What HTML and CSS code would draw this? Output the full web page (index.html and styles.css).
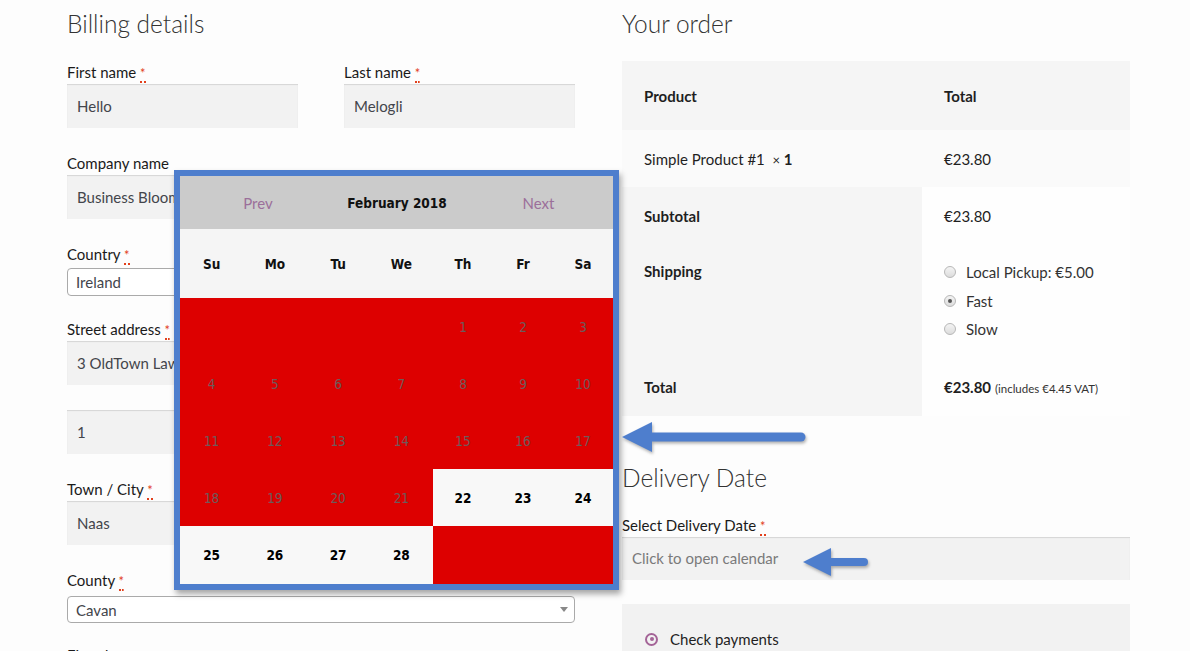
FILE: index.html
```html
<!DOCTYPE html>
<html lang="en">
<head>
<meta charset="utf-8">
<title>Checkout</title>
<link rel="stylesheet" href="styles.css">
</head>
<body>
<div class="page">
  <section class="billing">
    <h3 class="heading">Billing details</h3>
    <div class="row-two">
      <div class="field">
        <label class="label">First name <abbr class="req">*</abbr></label>
        <div class="input">Hello</div>
      </div>
      <div class="field">
        <label class="label">Last name <abbr class="req">*</abbr></label>
        <div class="input">Melogli</div>
      </div>
    </div>
    <div class="field">
      <label class="label">Company name</label>
      <div class="input">Business Bloom</div>
    </div>
    <div class="field">
      <label class="label">Country <abbr class="req">*</abbr></label>
      <div class="select select-country">Ireland</div>
    </div>
    <div class="field field-street">
      <label class="label">Street address <abbr class="req">*</abbr></label>
      <div class="input">3 OldTown Lawn</div>
      <div class="input input-second">1</div>
    </div>
    <div class="field">
      <label class="label">Town / City <abbr class="req">*</abbr></label>
      <div class="input">Naas</div>
    </div>
    <div class="field">
      <label class="label">County <abbr class="req">*</abbr></label>
      <div class="select select-county">Cavan<span class="caret"></span></div>
    </div>
    <div class="field field-last">
      <label class="label">Eircode <abbr class="req">*</abbr></label>
    </div>
  </section>

  <section class="order">
    <h3 class="heading">Your order</h3>
    <table class="order-table">
      <thead>
        <tr class="head-row"><th class="c1">Product</th><th class="c2">Total</th></tr>
      </thead>
      <tbody>
        <tr class="item-row"><td class="c1">Simple Product #1&nbsp; <span class="qty">×</span> <strong>1</strong></td><td class="c2">€23.80</td></tr>
      </tbody>
      <tfoot>
        <tr class="sub-row"><th class="c1">Subtotal</th><td class="c2">€23.80</td></tr>
        <tr class="ship-row"><th class="c1">Shipping</th>
          <td class="c2">
            <ul class="ship-list">
              <li><span class="radio"></span>Local Pickup: €5.00</li>
              <li><span class="radio radio-on"></span>Fast</li>
              <li><span class="radio"></span>Slow</li>
            </ul>
          </td>
        </tr>
        <tr class="total-row"><th class="c1">Total</th><td class="c2"><strong>€23.80</strong> <small class="vat">(includes €4.45 VAT)</small></td></tr>
      </tfoot>
    </table>

    <h3 class="heading heading-delivery">Delivery Date</h3>
    <label class="label">Select Delivery Date <abbr class="req">*</abbr></label>
    <div class="input input-wide placeholder">Click to open calendar</div>

    <div class="payment">
      <div class="pay-option"><span class="pay-radio"></span>Check payments</div>
    </div>
  </section>
</div>

<div class="calendar">
  <div class="cal-head">
    <span class="cal-nav">Prev</span>
    <span class="cal-title">February 2018</span>
    <span class="cal-nav">Next</span>
  </div>
  <div class="cal-grid">
    <div class="dn">Su</div><div class="dn">Mo</div><div class="dn">Tu</div><div class="dn">We</div><div class="dn">Th</div><div class="dn">Fr</div><div class="dn">Sa</div>

    <div class="d off"></div><div class="d off"></div><div class="d off"></div><div class="d off"></div><div class="d off">1</div><div class="d off">2</div><div class="d off">3</div>
    <div class="d off">4</div><div class="d off">5</div><div class="d off">6</div><div class="d off">7</div><div class="d off">8</div><div class="d off">9</div><div class="d off">10</div>
    <div class="d off">11</div><div class="d off">12</div><div class="d off">13</div><div class="d off">14</div><div class="d off">15</div><div class="d off">16</div><div class="d off">17</div>
    <div class="d off">18</div><div class="d off">19</div><div class="d off">20</div><div class="d off">21</div><div class="d on">22</div><div class="d on">23</div><div class="d on">24</div>
    <div class="d on">25</div><div class="d on">26</div><div class="d on">27</div><div class="d on">28</div><div class="d off"></div><div class="d off"></div><div class="d off"></div>
  </div>
</div>

<svg class="arrow arrow-big" width="200" height="44" viewBox="0 0 200 44" aria-hidden="true">
  <line x1="30" y1="20" x2="183" y2="20" stroke="#4e7ecd" stroke-width="9" stroke-linecap="round"/>
  <polygon points="4,20 34,5 34,35" fill="#4e7ecd"/>
</svg>
<svg class="arrow arrow-small" width="80" height="36" viewBox="0 0 80 36" aria-hidden="true">
  <line x1="28" y1="16" x2="63" y2="16" stroke="#4e7ecd" stroke-width="8" stroke-linecap="round"/>
  <polygon points="2,16 30,2 30,30" fill="#4e7ecd"/>
</svg>
</body>
</html>
```

FILE: styles.css
```css
html, body {
  margin: 0;
  padding: 0;
  background: #fdfdfd;
  height: 651px;
  overflow: hidden;
}

body {
  font-family: "Lato", "Open Sans", sans-serif;
  font-size: 15px;
  color: #1f1f1f;
  position: relative;
}

.page {
  display: flex;
  gap: 47px;
  padding-left: 67px;
}

.billing { width: 508px; }
.order { width: 508px; }

.heading {
  margin: 8px 0 0;
  font-size: 24.5px;
  line-height: 32px;
  font-weight: 300;
  color: #333;
}

.row-two {
  display: flex;
  gap: 46px;
  margin-top: 22px;
}
.row-two .field { width: 231px; margin-top: 0; }

.field { margin-top: 25px; }
.field-street { margin-top: 23px; }
.field-last { margin-top: 22px; }

.label {
  display: block;
  line-height: 20px;
  margin-bottom: 2px;
  color: #1a1a1a;
}

.req {
  color: #e2401c;
  text-decoration: none;
  border-bottom: 2px dotted #e2401c;
  font-size: 13px;
  line-height: 10px;
}

.input {
  height: 44px;
  box-sizing: border-box;
  background: #f2f2f2;
  box-shadow: inset 0 1px 1px rgba(0,0,0,0.12);
  padding: 0 10px;
  line-height: 44px;
  color: #43454b;
  white-space: nowrap;
  overflow: hidden;
}

.input-second { margin-top: 25px; }

.select {
  position: relative;
  height: 28px;
  box-sizing: border-box;
  border: 1px solid #aaa;
  border-radius: 4px;
  background: #fff;
  padding: 0 8px;
  line-height: 26px;
  color: #43454b;
  margin-top: 4px;
}
.select-county { height: 27px; margin-top: 6px; }

.caret {
  position: absolute;
  right: 6px;
  top: 10px;
  width: 0;
  height: 0;
  border-left: 4px solid transparent;
  border-right: 4px solid transparent;
  border-top: 5px solid #888;
}

/* order table */
.order-table {
  margin-top: 21px;
  width: 508px;
  border-collapse: collapse;
  table-layout: fixed;
}
.order-table .c1 { width: 278px; }
.order-table th, .order-table td {
  text-align: left;
  padding: 0 0 0 22px;
  vertical-align: middle;
  color: #1f1f1f;
}
.order-table th { font-weight: 700; }

.head-row { background: #f5f5f5; height: 69px; }
.item-row { background: #fafafa; height: 57px; }
.sub-row { height: 57px; }
.sub-row th, .ship-row th, .total-row th { background: #f5f5f5; }
.sub-row td, .ship-row td, .total-row td { background: #fefefe; }
.ship-row { height: 114px; }
.ship-row th, .ship-row td { vertical-align: top; padding-top: 18px; }
.total-row { height: 58px; }

.qty { font-size: 13px; }

.ship-list {
  list-style: none;
  margin: 0;
  padding: 0;
}
.ship-list li {
  display: flex;
  align-items: center;
  height: 20px;
  margin-bottom: 8.5px;
  color: #333;
}

.radio {
  width: 12px;
  height: 12px;
  border-radius: 50%;
  border: 1px solid #b8b8b8;
  background: linear-gradient(#f4f4f4, #dcdcdc);
  margin-right: 10px;
  box-sizing: border-box;
  position: relative;
  flex: none;
}
.radio-on::after {
  content: "";
  position: absolute;
  left: 3px;
  top: 3px;
  width: 4px;
  height: 4px;
  border-radius: 50%;
  background: #555;
}

.vat { font-size: 11.5px; color: #333; }

.heading-delivery { margin-top: 46px; margin-bottom: 21px; }

.input-wide { height: 43px; line-height: 43px; margin-top: 1px; }
.placeholder { color: #7a7a7a; }

.payment {
  margin-top: 24px;
  background: #f2f2f2;
  height: 60px;
  padding: 25px 0 0 22px;
}
.pay-option {
  display: flex;
  align-items: center;
  height: 20px;
  color: #1f1f1f;
}
.pay-radio {
  width: 9px;
  height: 9px;
  border-radius: 50%;
  border: 2px solid #a46497;
  margin: 0 12px 0 1px;
  position: relative;
  flex: none;
}
.pay-radio::after {
  content: "";
  position: absolute;
  left: 2.5px;
  top: 2.5px;
  width: 4px;
  height: 4px;
  border-radius: 50%;
  background: #a46497;
}

/* calendar overlay */
.calendar {
  position: absolute;
  left: 174px;
  top: 170px;
  width: 433px;
  border: 6px solid #4e7ecd;
  box-shadow: 2px 4px 6px rgba(0,0,0,0.35);
  background: #f7f7f7;
}

.cal-head {
  height: 53px;
  background: #cbcbcb;
  display: grid;
  grid-template-columns: 156px 122px 155px;
  align-items: center;
  text-align: center;
}
.cal-nav {
  color: #9b6f9a;
  font-size: 15px;
}
.cal-nav:last-child { padding-left: 6px; }
.cal-title {
  font-family: "DejaVu Sans Condensed", "DejaVu Sans", sans-serif;
  font-weight: 700;
  font-size: 13.5px;
  color: #111;
}

.cal-grid {
  display: grid;
  grid-template-columns: repeat(4, 63.25px) repeat(3, 60px);
  grid-template-rows: 69px repeat(4, 57px) 58px;
  font-family: "DejaVu Sans Condensed", "DejaVu Sans", sans-serif;
  font-size: 13.5px;
}
.dn {
  background: #f5f5f5;
  font-weight: 700;
  color: #111;
  display: flex;
  align-items: center;
  justify-content: center;
}
.d {
  display: flex;
  align-items: center;
  justify-content: center;
}
.off {
  background: #dd0000;
  color: #6e5a5a;
}
.on {
  background: #f8f8f8;
  color: #000;
  font-weight: 700;
}

/* annotation arrows */
.arrow {
  position: absolute;
  filter: drop-shadow(1px 2px 1.5px rgba(0,0,0,0.3));
}
.arrow-big { left: 618px; top: 417px; }
.arrow-small { left: 801px; top: 546px; }
```
